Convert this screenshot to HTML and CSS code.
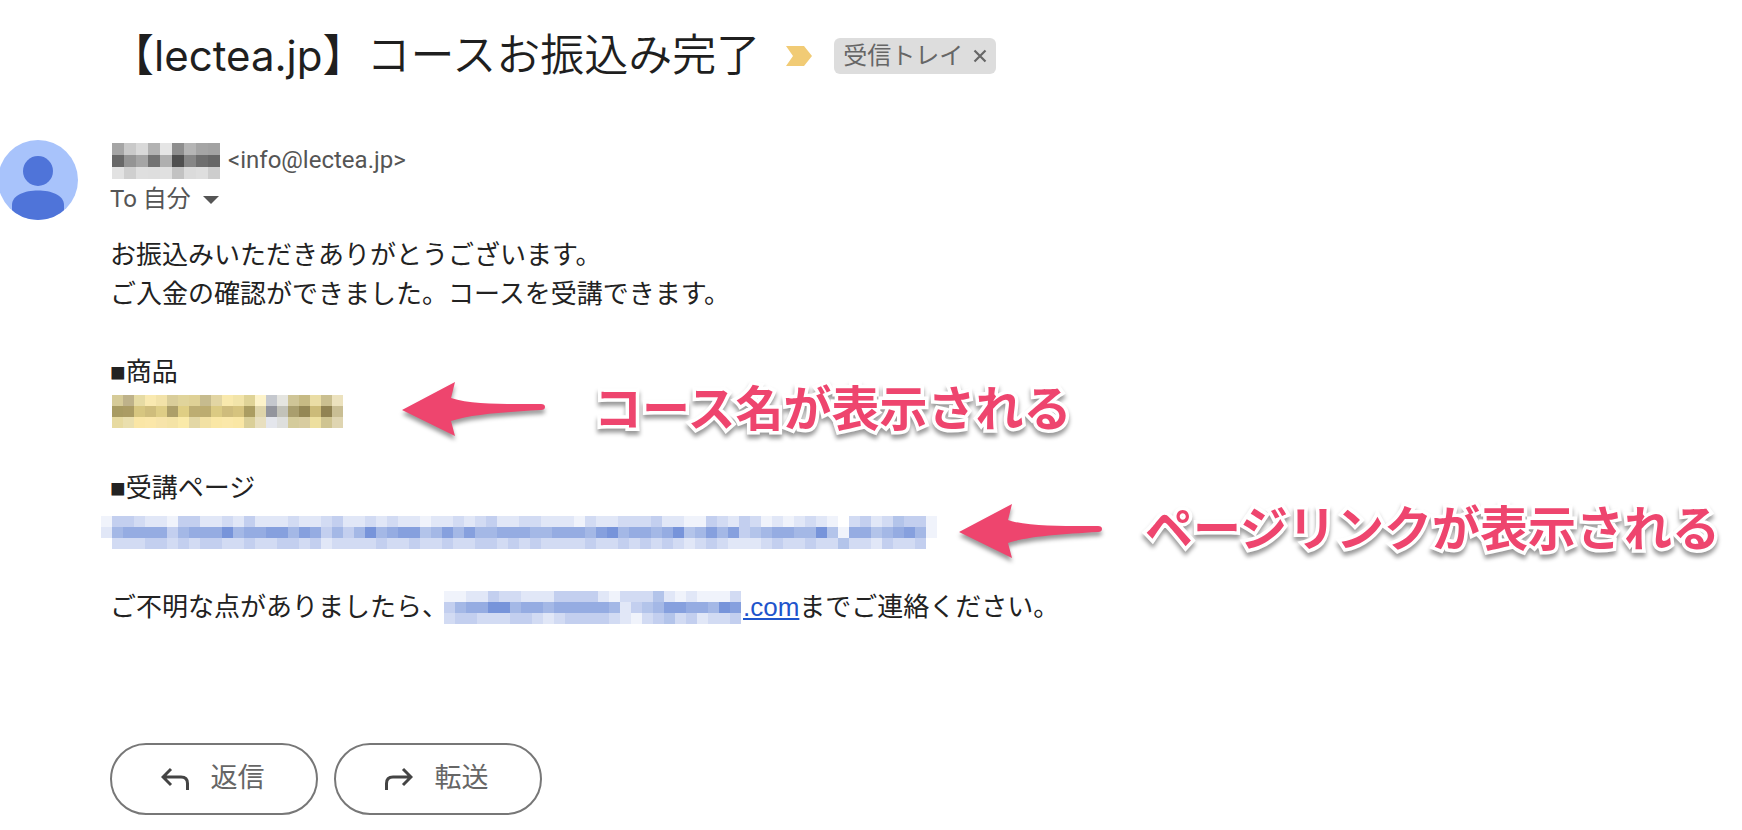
FILE: index.html
```html
<!DOCTYPE html>
<html lang="ja">

<head>
    <meta charset="UTF-8">
    <meta name="viewport" content="width=device-width, initial-scale=1.0">
    <title>【lectea.jp】コースお振込み完了</title>
    <link rel="stylesheet" href="styles.css">
</head>

<body>

    <header class="subject">
        <h1>【<span class="domain">lectea.jp</span>】コースお振込み完了</h1>
        <svg class="important" viewBox="0 0 26 20" aria-hidden="true">
            <path d="M0 0H18L26 10L18 20H0L7 10Z" fill="#f1cb75" />
        </svg>
        <div class="label">
            <span>受信トレイ</span>
            <button type="button" class="label-close" aria-label="ラベルを削除">
                <svg viewBox="0 0 14 14"><path d="M1.500 1.500L12.500 12.500M12.500 1.500L1.500 12.500" stroke="#666" stroke-width="2.200" /></svg>
            </button>
        </div>
    </header>

    <main class="mail">
        <svg class="avatar" viewBox="2 0 78 80" aria-hidden="true">
            <clipPath id="round"><circle cx="40" cy="40" r="40" /></clipPath>
            <g clip-path="url(#round)">
                <rect width="80" height="80" fill="#a8c3fb" />
                <circle cx="40" cy="31" r="15" fill="#4f74d9" />
                <path d="M14 80V65C14 55 27 50.500 40 50.500S66 55 66 65V80Z" fill="#4f74d9" />
            </g>
        </svg>

        <div class="content">
            <div class="sender">
                <svg class="mosaic" data-mosaic="name"></svg>
                <span>&lt;info@lectea.jp&gt;</span>
            </div>
            <div class="recipient">
                <span>To 自分</span>
                <button type="button" class="details" aria-label="詳細を表示">
                    <svg viewBox="0 0 16 8"><path d="M0 0H16L8 8Z" fill="#555" /></svg>
                </button>
            </div>

            <div class="message">
                <p>お振込みいただきありがとうございます。<br>ご入金の確認ができました。コースを受講できます。</p>

                <p>■商品</p>
                <div class="row">
                    <svg class="mosaic" data-mosaic="course"></svg>
                    <svg class="arrow" viewBox="0 0 144 54"><path d="M0 28L53 0L49 16C70 23 105 22 139 22Q143 22 143 25Q143 28 139 28C105 30 70 32 49 39L53 54Z" fill="#ee456e" /></svg>
                    <strong class="note">コース名が表示される</strong>
                </div>

                <p class="second">■受講ページ</p>
                <div class="row row-link">
                    <svg class="mosaic" data-mosaic="link"></svg>
                    <svg class="arrow" viewBox="0 0 144 54"><path d="M0 28L53 0L49 16C70 23 105 22 139 22Q143 22 143 25Q143 28 139 28C105 30 70 32 49 39L53 54Z" fill="#ee456e" /></svg>
                    <strong class="note">ページリンクが表示される</strong>
                </div>

                <p class="contact">ご不明な点がありましたら、<svg class="mosaic" data-mosaic="address"></svg><a href="#">.com</a>までご連絡ください。</p>
            </div>

            <div class="actions">
                <button type="button">
                    <svg viewBox="0 0 28 24"><path d="M10 2L2 10L10 18M2 10H20Q26.500 10 26.500 16.500V23" /></svg>
                    返信
                </button>
                <button type="button">
                    <svg viewBox="0 0 28 24"><path d="M18 2L26 10L18 18M26 10H8Q1.500 10 1.500 16.500V23" /></svg>
                    転送
                </button>
            </div>
        </div>
    </main>

    <script>
        // digits go from white (0) to the full blue (9)
        function blue(row) {
            return row.split('').map(function(n) {
                let t = n / 9
                return 'rgb(' + Math.round(255 - 136 * t) + ',' + Math.round(255 - 107 * t) + ',' + Math.round(255 - 37 * t) + ')'
            })
        }

        function hex(row) {
            return row.split(' ').map(function(c) {
                return '#' + c
            })
        }

        let mosaics = {
            name: {
                size: 12,
                rows: [
                    hex('a5a5a5 c9c9c9 d9d9d9 b2b2b2 e5e5e5 8e8e8e b5b5b5 a5a5a5 a2a2a2'),
                    hex('686868 949494 a5a5a5 727272 afafaf 4f4f4f 868686 6e6e6e 666666'),
                    hex('e2e2e2 cfcfcf dfdfdf dedede e0e0e0 c2c2c2 dbdbdb dedede cdcdcd')
                ]
            },
            course: {
                size: 11,
                rows: [
                    hex('d6cb98 beb28a e6dba4 f9e9b0 f2e2a9 d9cd9a e0d49b dfd196 c6bb8e e2d5a3 f9e9ad f2e4a9 dfd397 fdf3ca c5c8ce e5e5e0 cfc597 c6ba84 eadda5 cabf90 ece2be'),
                    hex('a89b62 ab9c64 d7c680 cfbd7c decd86 ad9f69 dfce84 bdad72 bcac70 dbca83 cfbc7c d6c37e ab9d62 ded4aa 93959d c2c2b9 a99e6e 948755 ccbb79 918353 c9be94'),
                    hex('e7daa0 eadfae fae6a6 fbe7a9 f7e4aa f4e3a6 faeaa9 e3d7a5 f2e1a4 fae7a5 fbe8a9 fae7a5 dacf98 e8dfbf e4e6ec dedfdd d4cb9b d8cca0 eddf9f cfc491 dfd5b1')
                ]
            },
            link: {
                size: 11,
                rows: [
                    blue('1443221442232422232234223232212232342233222132233342211432431212321034235441'),
                    blue('2677774677796778868746469678856868667776677768967767956868456776695177567861'),
                    blue('0333443434433433443423333433433433443434333343343434323432223433433533243340')
                ]
            },
            address: {
                size: 11,
                rows: [
                    blue('112243322244442133352121113'),
                    blue('467799677677777624568877698'),
                    blue('344333443234444321345342334')
                ]
            }
        }

        document.querySelectorAll('.mosaic').forEach(function(svg) {
            let m = mosaics[svg.dataset.mosaic]
            let w = m.rows[0].length * m.size
            let h = m.rows.length * m.size
            svg.setAttribute('viewBox', '0 0 ' + w + ' ' + h)
            svg.setAttribute('width', w)
            svg.setAttribute('height', h)
            m.rows.forEach(function(row, y) {
                row.forEach(function(color, x) {
                    let r = document.createElementNS('http://www.w3.org/2000/svg', 'rect')
                    r.setAttribute('x', x * m.size)
                    r.setAttribute('y', y * m.size)
                    r.setAttribute('width', m.size)
                    r.setAttribute('height', m.size)
                    r.setAttribute('fill', color)
                    svg.appendChild(r)
                })
            })
        })
    </script>

</body>

</html>
```
FILE: styles.css
```css
* {
    box-sizing: border-box;
}

body {
    margin: 0;
    background: #fff;
    color: #222;
    font-family: "Liberation Sans", "Noto Sans CJK JP", sans-serif;
    font-size: 26px;
    line-height: 39px;
}

h1,
p {
    margin: 0;
}

button {
    font: inherit;
    color: inherit;
    background: none;
    border: 0;
    padding: 0;
    cursor: pointer;
}

.subject {
    display: flex;
    align-items: center;
    padding: 24px 0 0 110px;
    white-space: nowrap;
}

.subject h1 {
    font-family: Roboto, "Noto Sans CJK JP", sans-serif;
    font-size: 44px;
    font-weight: 350;
    line-height: 64px;
    color: #1f1f1f;
}

.subject .domain {
    font-family: Inter, sans-serif;
    font-size: 42px;
    font-weight: 400;
}

.important {
    width: 26px;
    height: 20px;
    margin: 0 22px 0 26px;
}

.label {
    display: flex;
    align-items: center;
    gap: 10px;
    height: 36px;
    padding: 0 9px;
    border-radius: 6px;
    background: #ddd;
    color: #666;
    font-size: 24px;
    line-height: 36px;
}

.label-close,
.label-close svg,
.details svg {
    display: block;
}

.label-close svg {
    width: 14px;
    height: 14px;
}

.mail {
    display: flex;
    padding-top: 52px;
}

.avatar {
    flex: none;
    width: 78px;
    height: 80px;
    margin-right: 32px;
}

.content {
    flex: 1;
    min-width: 0;
    padding-top: 1px;
}

.sender,
.recipient {
    display: flex;
    align-items: center;
    color: #555;
    font-family: Roboto, "Noto Sans CJK JP", sans-serif;
    font-size: 24px;
    line-height: 39px;
}

.sender {
    gap: 8px;
    padding-left: 2px;
}

.recipient {
    gap: 12px;
}

.details svg {
    width: 16px;
    height: 8px;
}

.mosaic {
    flex: none;
    shape-rendering: crispEdges;
}

.message {
    padding-top: 17px;
    white-space: nowrap;
}

.message p + p {
    margin-top: 39px;
}

.message .second {
    margin-top: 38px;
}

.row {
    display: flex;
    align-items: center;
    height: 39px;
    padding-left: 2px;
}

.row-link {
    height: 48px;
    margin-left: -9px;
    padding-left: 0;
}

.arrow {
    flex: none;
    width: 144px;
    height: 54px;
    margin: 0 48px 6px 59px;
    overflow: visible;
    filter: drop-shadow(0 4px 2px rgba(0, 0, 0, 0.4));
}

.note {
    margin-bottom: 4px;
    color: #ee456e;
    font-size: 48px;
    font-weight: 700;
    line-height: 48px;
    -webkit-text-stroke: 7px #fff;
    paint-order: stroke fill;
    filter: drop-shadow(0 4px 2px rgba(0, 0, 0, 0.4));
}

.row-link .arrow {
    margin: 0 42px 3px 22px;
}

.row-link .note {
    margin-bottom: 4px;
}

.contact {
    padding-top: 32px;
}

.contact .mosaic {
    margin: 0 2px 4px -4px;
    vertical-align: middle;
}

.contact a {
    color: #1f55cc;
}

.actions {
    display: flex;
    gap: 16px;
    padding-top: 115px;
}

.actions button {
    display: flex;
    align-items: center;
    justify-content: center;
    gap: 22px;
    width: 208px;
    height: 72px;
    padding-right: 3px;
    border: 2px solid #777;
    border-radius: 36px;
    color: #666;
    font-size: 27px;
}

.actions svg {
    width: 28px;
    height: 24px;
    fill: none;
    stroke: #444;
    stroke-width: 3;
}
```
